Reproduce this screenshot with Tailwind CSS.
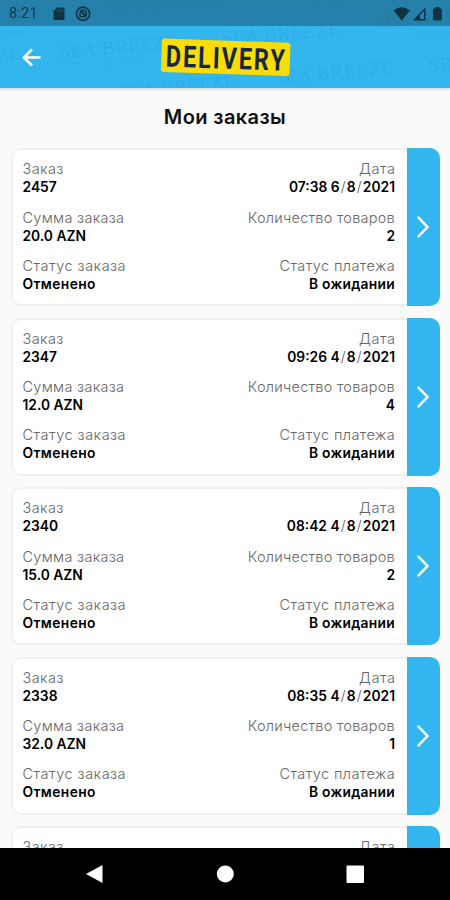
<!DOCTYPE html>
<html lang="ru">
<head>
<meta charset="utf-8">
<title>Мои заказы</title>
<script src="https://cdn.jsdelivr.net/npm/@tailwindcss/browser@4"></script>
</head>
<body class="w-[450px] h-[900px] overflow-hidden bg-[#fafafa] font-['Inter',sans-serif] text-black">
<div class="flex flex-col h-[900px]">
  <header class="relative h-[88px] shrink-0 overflow-hidden bg-[#33b5ee] shadow-[0_1px_3px_rgba(0,0,0,0.2)] flex flex-col">
    <svg class="absolute inset-0" width="450" height="88" font-family="Liberation Serif, serif" font-size="19" fill="#1b89bd" fill-opacity=".2">
      <text x="106" y="13" transform="rotate(-4 106 13)" textLength="120">SEA BREEZE</text>
      <text x="60" y="58" transform="rotate(-5 60 58)" textLength="118">SEA BREEZE</text>
      <text x="222" y="44" transform="rotate(-4 222 44)" textLength="118">SEA BREEZE</text>
      <text x="374" y="28" transform="rotate(-5 374 28)" textLength="120">SEA BREEZE</text>
      <text x="274" y="84" transform="rotate(-5 274 84)" textLength="120">SEA BREEZE</text>
      <text x="429" y="72" transform="rotate(-5 429 72)" textLength="120">SEA BREEZE</text>
      <text x="120" y="98" transform="rotate(-5 120 98)" textLength="116">SEA BREEZE</text>
      <text x="-98" y="70" transform="rotate(-5 -98 70)" textLength="120">SEA BREEZE</text>
      <g font-size="7"><text x="102" y="67" transform="rotate(-5 102 67)" textLength="42">RESORT</text><text x="312" y="9" transform="rotate(-5 312 9)" textLength="32">RESORT</text><text x="416" y="40" transform="rotate(-5 416 40)" textLength="42">RESORT</text><text x="4" y="34" textLength="22">RESORT</text></g>
    </svg>
    <div class="relative h-[26px] shrink-0 bg-[#184e68]/50 flex items-center">
      <span class="ml-[9px] mt-[2px] w-[44px] text-[14.5px] leading-none font-['Roboto',sans-serif] text-[#123c50] tracking-[0.2px]">8:21</span>
      <svg class="mt-[2px]" width="42" height="18" viewBox="0 0 42 18"><path d="M4.2 2.5H10.500Q11.500 2.500 11.500 3.500V14Q11.500 15 10.500 15H1.500Q.5 15 .5 14V6.200Z" fill="#103344"/><path d="M4.300 5v2.200M6.600 4v3M8.900 4v3" stroke="#226680" stroke-width=".8"/><g fill="none" stroke="#103344"><circle cx="30" cy="8.700" r="6.600" stroke-width="1.600"/><path d="M27 11.500V8.500a3.200 3.200 0 1 1 3.200 3.200Z" stroke-width="1.400"/><path d="M28 6l5 5.500" stroke-width="2"/></g></svg>
      <svg class="ml-auto mr-[7px] mt-[1px]" width="50" height="18" viewBox="0 0 50 18" fill="#103344"><path d="M.5 5.500Q8.500-1 17 5.500L8.800 15.500Z"/><path d="M19.500 15.500L32.500 2.500V15.500Z M27 9.800V14H31V6Z" fill-rule="evenodd"/><path d="M42.300 2h4v1.500h1.500q1 0 1 1V14.500q0 1-1 1H41q-1 0-1-1V4.500q0-1 1-1h1.300Z"/></svg>
    </div>
    <div class="relative flex-1 flex items-center">
      <svg class="ml-[21px]" width="22" height="20" viewBox="0 0 22 20" fill="none" stroke="#fff" stroke-width="2.500"><path d="M19.500 10.500H3M11 2.500L2.800 10.500L11 18.500"/></svg>
      <svg class="ml-[117px]" width="134" height="42" viewBox="0 0 134 42"><path d="M4 2.500Q2 2.500 1.900 4.500L1 33.500Q1 35.800 3.200 36L127 40Q129.300 40 129.500 37.800L130.500 9.500Q130.500 7 128.300 6.800Z" fill="#fadc09"/><text x="5.500" y="30.500" transform="rotate(2 5.500 30.500)" font-family="Roboto, sans-serif" font-weight="700" font-size="30" letter-spacing="2.500" textLength="121" lengthAdjust="spacingAndGlyphs" fill="#17283f">DELIVERY</text></svg>
    </div>
  </header>
  <main class="flex-1 min-h-0 overflow-hidden">
    <h1 class="h-[60.400px] pt-[14px] text-center text-[20px] leading-[30px] font-semibold tracking-[0.4px] text-[#111]">Мои заказы</h1>
    <div id="orders" class="flex flex-col gap-[11.500px] pl-[11px] pr-[10.500px]"></div>
  </main>
  <nav class="relative h-[52px] shrink-0 bg-black">
    <svg width="450" height="52" viewBox="0 0 450 52" fill="#fff"><path d="M86 26L102.500 17V35Z"/><circle cx="225.300" cy="26" r="8.500"/><rect x="346.500" y="17.500" width="17.500" height="17.500" rx="1"/></svg>
  </nav>
</div>
<script>
const orders = [
  ['2457', '07:38 6/8/2021', '20.0 AZN', '2'],
  ['2347', '09:26 4/8/2021', '12.0 AZN', '4'],
  ['2340', '08:42 4/8/2021', '15.0 AZN', '2'],
  ['2338', '08:35 4/8/2021', '32.0 AZN', '1'],
  ['2337', '08:30 4/8/2021', '20.0 AZN', '1']
];
const tracking = {
  'Заказ': 'tracking-[0.4px]',
  'Дата': 'tracking-[0.6px] -mr-[0.6px]',
  'Сумма заказа': 'tracking-[0.3px]',
  'Количество товаров': 'tracking-[0.25px]',
  'Статус заказа': 'tracking-[0.500px]',
  'Статус платежа': 'tracking-[0.4px]',
  'Отменено': 'tracking-[0.4px]',
  'В ожидании': 'tracking-[0.3px]'
};
const label = (t) => `<div class="text-[14.500px] leading-[18px] font-light text-[#666] ${tracking[t]}">${t}</div>`;
const value = (t) => `<div class="text-[13.800px] leading-[18px] font-semibold ${tracking[t] || ''}">${t.replaceAll('/', '<span class="font-light text-[#555] px-[1.200px]">/</span>')}</div>`;
const row = (a, b, c, d) => `<div class="flex justify-between h-[48.300px]"><div>${label(a)}${value(b)}</div><div class="text-right">${label(c)}${value(d)}</div></div>`;
document.getElementById('orders').innerHTML = orders.map(([id, date, sum, count]) => `
  <article class="flex shrink-0 h-[158px] rounded-[10px] overflow-hidden bg-white">
    <div class="flex-1 rounded-l-[10px] border-2 border-r-0 border-[#f0f0f0] pl-[9.500px] pr-[11.500px] pt-[10px]">
      ${row('Заказ', id, 'Дата', date)}
      ${row('Сумма заказа', sum, 'Количество товаров', count)}
      ${row('Статус заказа', 'Отменено', 'Статус платежа', 'В ожидании')}
    </div>
    <div class="w-[33px] bg-[#33b5ee] flex items-center justify-center">
      <svg width="14" height="22" viewBox="0 0 14 22" fill="none" stroke="#fff" stroke-width="2.500" stroke-linecap="round"><path d="M2.500 1.700L11.500 11L2.500 20.300"/></svg>
    </div>
  </article>`).join('');
</script>
</body>
</html>
